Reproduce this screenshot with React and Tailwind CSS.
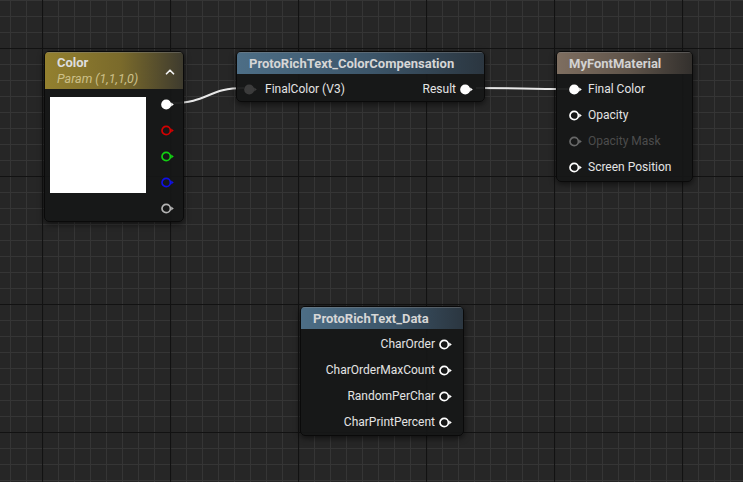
import React from "react";
import { ChevronUp } from "lucide-react";

const Pin = ({ color = "#ffffff", filled = false, dim = false }) => (
  <svg width="13" height="11" viewBox="0 0 13 11" className="shrink-0">
    <circle
      cx="5.2"
      cy="5.5"
      r="4.2"
      fill={filled ? color : "none"}
      stroke={color}
      strokeWidth="1.7"
      opacity={dim ? 0.35 : 1}
    />
    <polygon points="10.2,3.5 12.8,5.5 10.2,7.5" fill={color} opacity={dim ? 0.35 : 1} />
  </svg>
);

const Node = ({ className, header, headerClass, children }) => (
  <div
    className={`absolute rounded-[5px] border border-[#0a0a0a] bg-[#161717]/95 shadow-[0_2px_6px_rgba(0,0,0,0.6)] overflow-hidden ${className}`}
  >
    <div className={`${headerClass} border-t border-[#8a8a8a]/40`}>{header}</div>
    {children}
  </div>
);

const InputRow = ({ label, pin, textClass = "text-[#e4e4e4]" }) => (
  <div className="h-[26px] flex items-center pl-[12px]">
    {pin}
    <span className={`ml-[6px] ${textClass}`}>{label}</span>
  </div>
);

const OutputRow = ({ label, pin }) => (
  <div className="h-[26px] flex items-center justify-end pr-[11px]">
    <span className="text-[#e4e4e4] mr-[4px]">{label}</span>
    {pin}
  </div>
);

export default function App() {
  return (
    <div className="relative w-[743px] h-[482px] overflow-hidden bg-[#262626] font-['Roboto',sans-serif] text-[12px]">
      {/* grid */}
      <svg className="absolute inset-0" width="743" height="482">
        <defs>
          <pattern id="minor" x="10" y="0" width="16" height="16" patternUnits="userSpaceOnUse">
            <path d="M0.5 0 V16 M0 0.5 H16" stroke="#353535" strokeWidth="1" fill="none" />
          </pattern>
          <pattern id="major" x="42" y="48" width="128" height="128" patternUnits="userSpaceOnUse">
            <path d="M0.5 0 V128 M0 0.5 H128" stroke="#121212" strokeWidth="1.2" fill="none" />
          </pattern>
        </defs>
        <rect width="743" height="482" fill="url(#minor)" />
        <rect width="743" height="482" fill="url(#major)" />
      </svg>

      {/* wires */}
      <svg className="absolute inset-0" width="743" height="482">
        <path d="M172 103 C 208 103, 208 88, 244 88" stroke="#e8e8e8" strokeWidth="2" fill="none" />
        <path d="M476 88 C 520 88, 524 89, 568 89" stroke="#e8e8e8" strokeWidth="2" fill="none" />
      </svg>

      {/* Color param node */}
      <Node
        className="left-[44px] top-[51px] w-[140px] h-[171px]"
        headerClass="h-[37px] bg-[linear-gradient(to_right,#93802f,#7a6a2b_55%,#3e3b2e)] flex items-center justify-between pl-[12px] pr-[6px]"
        header={
          <>
            <div className="flex flex-col leading-[16px]">
              <span className="font-bold text-[13px] text-[#dedede]">Color</span>
              <span className="italic text-[12.5px] text-[#cdc08a]">Param (1,1,1,0)</span>
            </div>
            <ChevronUp size={14} strokeWidth={3} color="#f2f2f2" className="mt-[1px]" />
          </>
        }
      >
        <div className="flex">
          <div className="mt-[8px] ml-[5px] w-[96px] h-[96px] bg-white" />
          <div className="ml-[15px] pt-[2px] flex flex-col">
            <div className="h-[26px] flex items-center"><Pin filled /></div>
            <div className="h-[26px] flex items-center"><Pin color="#d40000" /></div>
            <div className="h-[26px] flex items-center"><Pin color="#12d012" /></div>
            <div className="h-[26px] flex items-center"><Pin color="#1010e6" /></div>
            <div className="h-[26px] flex items-center"><Pin color="#b4b4b4" /></div>
          </div>
        </div>
      </Node>

      {/* ColorCompensation node */}
      <Node
        className="left-[236px] top-[51px] w-[249px] h-[51px]"
        headerClass="h-[22px] bg-[linear-gradient(to_right,#4d6e86,#3c5569_55%,#2b3640)] flex items-center pl-[12px]"
        header={<span className="font-bold text-[13px] text-[#d6d6d6]">ProtoRichText_ColorCompensation</span>}
      >
        <div className="pt-[2px] flex items-center justify-between">
          <div className="h-[26px] flex items-center pl-[7px]">
            <Pin color="#3c3c3c" filled />
            <span className="ml-[8px] text-[#e4e4e4]">FinalColor (V3)</span>
          </div>
          <OutputRow label="Result" pin={<Pin filled />} />
        </div>
      </Node>

      {/* MyFontMaterial node */}
      <Node
        className="left-[556px] top-[51px] w-[137px] h-[131px]"
        headerClass="h-[22px] bg-[linear-gradient(to_right,#7e6e60,#5e5349_55%,#33302d)] flex items-center pl-[12px]"
        header={<span className="font-bold text-[13px] text-[#d2d2d2]">MyFontMaterial</span>}
      >
        <div className="pt-[2px] flex flex-col">
          <InputRow label="Final Color" pin={<Pin filled />} />
          <InputRow label="Opacity" pin={<Pin />} />
          <InputRow label="Opacity Mask" pin={<Pin dim />} textClass="text-[#4c4c4c]" />
          <InputRow label="Screen Position" pin={<Pin />} />
        </div>
      </Node>

      {/* ProtoRichText_Data node */}
      <Node
        className="left-[300px] top-[306px] w-[164px] h-[130px]"
        headerClass="h-[22px] bg-[linear-gradient(to_right,#4d6e86,#3c5569_55%,#2b3640)] flex items-center pl-[12px]"
        header={<span className="font-bold text-[13px] text-[#d6d6d6]">ProtoRichText_Data</span>}
      >
        <div className="pt-[2px] flex flex-col">
          <OutputRow label="CharOrder" pin={<Pin />} />
          <OutputRow label="CharOrderMaxCount" pin={<Pin />} />
          <OutputRow label="RandomPerChar" pin={<Pin />} />
          <OutputRow label="CharPrintPercent" pin={<Pin />} />
        </div>
      </Node>
    </div>
  );
}
